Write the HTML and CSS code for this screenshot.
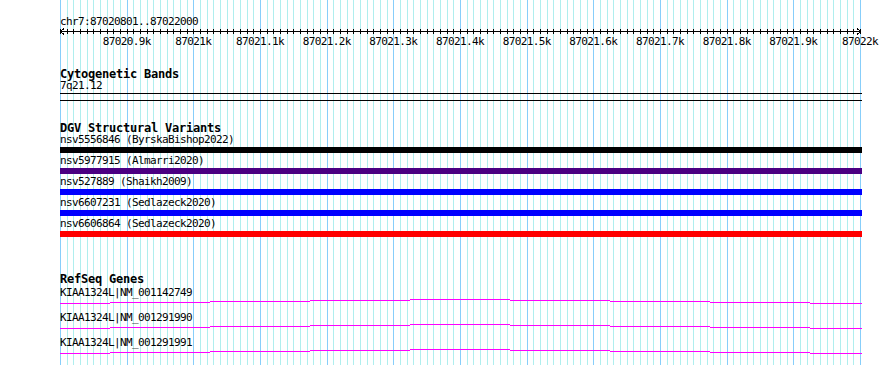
FILE: index.html
```html
<!DOCTYPE html>
<html lang="en">
<head>
    <meta charset="UTF-8">
    <title>chr7:87020801..87022000</title>
    <link rel="stylesheet" href="styles.css">
</head>
<body>

<div class="browser">
    <!-- background grid: minor line every 10bp, major every 100bp -->
    <svg class="grid" width="801" height="365">
        <defs>
            <pattern id="minorGrid" width="20" height="365" patternUnits="userSpaceOnUse">
                <rect x="0" y="0" width="1" height="365" fill="#afeeee"/>
                <rect x="7" y="0" width="1" height="365" fill="#afeeee"/>
                <rect x="13" y="0" width="1" height="365" fill="#afeeee"/>
            </pattern>
            <pattern id="majorGrid" width="200" height="365" patternUnits="userSpaceOnUse">
                <rect x="0" y="0" width="1" height="365" fill="#87cefa"/>
                <rect x="67" y="0" width="1" height="365" fill="#87cefa"/>
                <rect x="133" y="0" width="1" height="365" fill="#87cefa"/>
            </pattern>
            <pattern id="ticks" width="20" height="40" patternUnits="userSpaceOnUse">
                <rect x="0" y="0" width="1" height="40" fill="#000"/>
                <rect x="7" y="0" width="1" height="40" fill="#000"/>
                <rect x="13" y="0" width="1" height="40" fill="#000"/>
            </pattern>
        </defs>
        <rect x="0" y="0" width="801" height="365" fill="url(#minorGrid)"/>
        <rect x="0" y="0" width="801" height="365" fill="url(#majorGrid)"/>
    </svg>

    <svg class="ruler" width="830" height="69">
        <text class="ruler-text" x="0" y="25">chr7:87020801..87022000</text>
        <rect x="0" y="29" width="801" height="5" fill="url(#ticks)"/>
        <path class="axis" d="M0 31.5H801 M4 28.5L0.5 31.5L4 34.5 M797 28.5L800.5 31.5L797 34.5"/>
        <text class="ruler-text" x="66.7" y="45" text-anchor="middle">87020.9k</text>
        <text class="ruler-text" x="133.3" y="45" text-anchor="middle">87021k</text>
        <text class="ruler-text" x="200" y="45" text-anchor="middle">87021.1k</text>
        <text class="ruler-text" x="266.7" y="45" text-anchor="middle">87021.2k</text>
        <text class="ruler-text" x="333.3" y="45" text-anchor="middle">87021.3k</text>
        <text class="ruler-text" x="400" y="45" text-anchor="middle">87021.4k</text>
        <text class="ruler-text" x="466.7" y="45" text-anchor="middle">87021.5k</text>
        <text class="ruler-text" x="533.3" y="45" text-anchor="middle">87021.6k</text>
        <text class="ruler-text" x="600" y="45" text-anchor="middle">87021.7k</text>
        <text class="ruler-text" x="666.7" y="45" text-anchor="middle">87021.8k</text>
        <text class="ruler-text" x="733.3" y="45" text-anchor="middle">87021.9k</text>
        <text class="ruler-text" x="800" y="45" text-anchor="middle">87022k</text>
    </svg>

    <section class="track cyto">
        <div class="track-title">Cytogenetic Bands</div>
        <div class="feature-label">7q21.12</div>
        <div class="band"></div>
    </section>

    <section class="track dgv">
        <div class="track-title">DGV Structural Variants</div>
        <div class="variant">
            <div class="feature-label">nsv5556846 (ByrskaBishop2022)</div>
            <div class="bar black"></div>
        </div>
        <div class="variant">
            <div class="feature-label">nsv5977915 (Almarri2020)</div>
            <div class="bar purple"></div>
        </div>
        <div class="variant">
            <div class="feature-label">nsv527889 (Shaikh2009)</div>
            <div class="bar blue"></div>
        </div>
        <div class="variant">
            <div class="feature-label">nsv6607231 (Sedlazeck2020)</div>
            <div class="bar blue"></div>
        </div>
        <div class="variant">
            <div class="feature-label">nsv6606864 (Sedlazeck2020)</div>
            <div class="bar red"></div>
        </div>
    </section>

    <section class="track refseq">
        <div class="track-title">RefSeq Genes</div>
        <div class="transcript">
            <div class="feature-label">KIAA1324L|NM_001142749</div>
            <svg class="intron" width="802" height="13">
                <path d="M0 4.5H50 M50 3.5H150 M150 2.5H250 M250 1.5H350 M350 0.5H450 M450 1.5H550 M550 2.5H650 M650 3.5H750 M750 4.5H802"/>
            </svg>
        </div>
        <div class="transcript">
            <div class="feature-label">KIAA1324L|NM_001291990</div>
            <svg class="intron" width="802" height="13">
                <path d="M0 4.5H50 M50 3.5H150 M150 2.5H250 M250 1.5H350 M350 0.5H450 M450 1.5H550 M550 2.5H650 M650 3.5H750 M750 4.5H802"/>
            </svg>
        </div>
        <div class="transcript">
            <div class="feature-label">KIAA1324L|NM_001291991</div>
            <svg class="intron" width="802" height="13">
                <path d="M0 4.5H50 M50 3.5H150 M150 2.5H250 M250 1.5H350 M350 0.5H450 M450 1.5H550 M550 2.5H650 M650 3.5H750 M750 4.5H802"/>
            </svg>
        </div>
    </section>
</div>

</body>
</html>
```

FILE: styles.css
```css
body {
    margin: 0;
    background-color: #ffffff;
    color: #000000;
    font-family: "DejaVu Sans Mono", monospace;
}
.browser {
    position: relative;
    z-index: 0;
    margin-left: 60px;
    width: 802px;
    height: 365px;
}
.grid {
    position: absolute;
    left: 0;
    top: 0;
    z-index: -1;
    shape-rendering: crispEdges;
}
.ruler {
    display: block;
    overflow: visible;
    shape-rendering: crispEdges;
}
.ruler-text {
    font-family: "DejaVu Sans Mono", monospace;
    font-size: 11px;
    letter-spacing: -0.62px;
    fill: #000;
}
.axis {
    fill: none;
    stroke: #000;
    stroke-width: 1;
}
.track-title {
    font-size: 12px;
    font-weight: bold;
    letter-spacing: -0.22px;
    line-height: 11px;
    height: 11px;
    white-space: nowrap;
}
.feature-label {
    font-size: 11px;
    letter-spacing: -0.62px;
    line-height: 12px;
    height: 12px;
    white-space: nowrap;
}
.cyto {
    margin-top: 0;
}
.band {
    box-sizing: border-box;
    margin-top: 1px;
    width: 802px;
    height: 8px;
    border-top: 1px solid #000;
    border-bottom: 1px solid #000;
}
.dgv {
    margin-top: 22px;
}
.variant + .variant {
    margin-top: 2px;
}
.bar {
    margin-top: 1px;
    width: 802px;
    height: 6px;
}
.bar.black { background-color: #000000; }
.bar.purple { background-color: #4b0082; }
.bar.blue { background-color: #0000ff; }
.bar.red { background-color: #ff0000; }
.refseq {
    margin-top: 37px;
}
.refseq .track-title {
    margin-bottom: 2px;
}
.intron {
    display: block;
    shape-rendering: crispEdges;
}
.intron path {
    fill: none;
    stroke: #ff00ff;
    stroke-width: 1;
}
```
